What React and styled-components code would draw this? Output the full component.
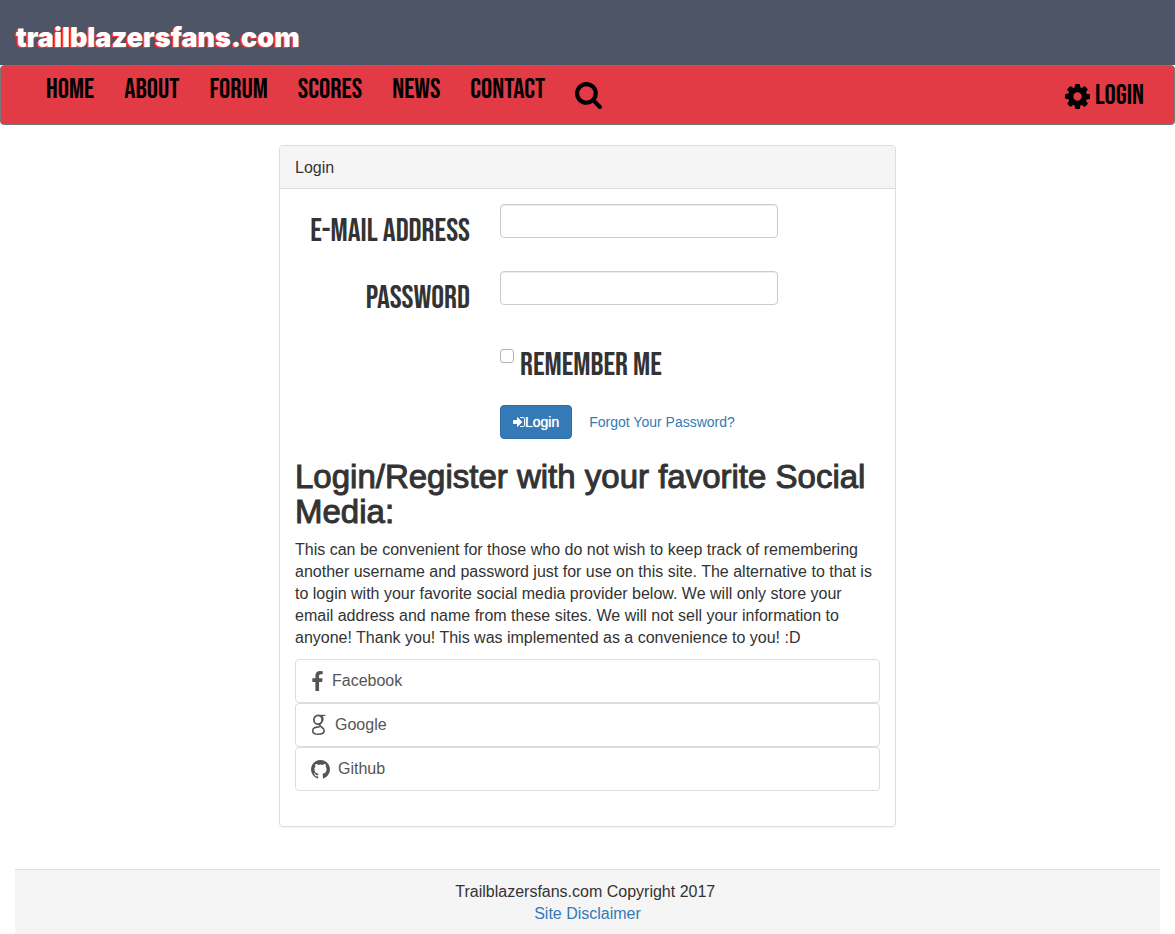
import React from "react";
import styled, { createGlobalStyle } from "styled-components";

const display = `"Bebas Neue", "Liberation Sans Narrow", "Roboto Condensed", "Liberation Sans", sans-serif`;

const GlobalStyle = createGlobalStyle`
  *, *::before, *::after { box-sizing: border-box; }
  body {
    margin: 0;
    background: #fff;
    color: #333;
    font-family: "Helvetica Neue", Helvetica, "Liberation Sans", Arial, sans-serif;
    font-size: 16px;
    line-height: 22px;
  }
  a { color: #337ab7; text-decoration: none; }
  a:hover { text-decoration: underline; }
`;

const Header = styled.header`
  height: 65px;
  padding: 22px 16px 0;
  background: #4e5566;
`;

const Logo = styled.a`
  && { color: #fff; text-decoration: none; }
  display: inline-block;
  font-family: Inter, sans-serif;
  font-size: 27px;
  font-weight: 900;
  line-height: 32px;
  text-shadow: -2px 1px 0 #f33;
`;

const Navbar = styled.nav`
  display: flex;
  justify-content: space-between;
  min-height: 60px;
  padding: 0 15px;
  margin-bottom: 20px;
  background: #e23b46;
  border: 1px solid #777;
  border-radius: 4px;
`;

const NavList = styled.ul`
  display: flex;
  margin: 0;
  padding: 0 0 0 15px;
  list-style: none;
`;

const NavLink = styled.a`
  && { color: #000; }
  display: flex;
  align-items: center;
  gap: 5px;
  padding: ${(p) => (p.$low ? "16px" : "10px")} 15px 0;
  font-family: ${display};
  font-size: 28px;
  line-height: 28px;
`;

const Icon = styled.svg`
  display: block;
  flex: none;
  width: ${(p) => p.$w}px;
  height: ${(p) => p.$h || p.$w}px;
  fill: currentColor;
`;

const Container = styled.main`
  max-width: 647px;
  margin: 0 auto;
  padding: 0 15px;
`;

const Panel = styled.section`
  margin-bottom: 42px;
  border: 1px solid #ddd;
  border-radius: 4px;
  box-shadow: 0 1px 1px rgba(0, 0, 0, 0.05);
`;

const PanelHeading = styled.div`
  padding: 11px 15px 9px;
  background: #f5f5f5;
  border-bottom: 1px solid #ddd;
  border-radius: 3px 3px 0 0;
`;

const PanelBody = styled.div`
  padding: 15px 15px 35px;
`;

const FormRow = styled.div`
  display: grid;
  grid-template-columns: 4fr 6fr 2fr;
  margin: 0 -15px 15px;
  > * { margin-left: 15px; margin-right: 15px; }
`;

const Label = styled.label`
  padding: 5px 0 2px;
  font-family: ${display};
  font-size: 32px;
  font-weight: 400;
  line-height: 45px;
  text-align: ${(p) => (p.$plain ? "left" : "right")};
  text-transform: uppercase;
  white-space: nowrap;
`;

const Input = styled.input`
  width: 100%;
  height: 34px;
  padding: 6px 12px;
  border: 1px solid #ccc;
  border-radius: 4px;
  box-shadow: inset 0 1px 1px rgba(0, 0, 0, 0.075);
  font: inherit;
  color: #555;
`;

const Field = styled.div`
  grid-column: ${(p) => (p.$wide ? "2 / 4" : "2")};
  display: flex;
  align-items: ${(p) => (p.$wide ? "center" : "flex-start")};
`;

const Checkbox = styled.input`
  appearance: none;
  width: 14px;
  height: 14px;
  margin: 11px 6px 0 0;
  border: 1px solid #b3b3b3;
  border-radius: 3px;
  background: #fff;
  &:checked { background: #337ab7; }
`;

const Button = styled.button`
  display: flex;
  align-items: center;
  height: 34px;
  padding: 6px 12px;
  margin-right: 17px;
  border: 1px solid #2e6da4;
  border-radius: 4px;
  background: #337ab7;
  color: #fff;
  font: 400 14px/20px "Helvetica Neue", "Liberation Sans", sans-serif;
  text-shadow: 0 0 1px #fff;
`;

const SmallLink = styled.a`
  font-size: 14px;
  line-height: 20px;
`;

const Title = styled.h2`
  margin: 20px 0 10px;
  font-size: 33px;
  font-weight: 400;
  line-height: 35px;
  -webkit-text-stroke: 1px #333;
`;

const Text = styled.p`
  margin: 0 0 10px;
`;

const Social = styled.a`
  && { color: #555; }
  display: flex;
  align-items: center;
  gap: 8px;
  padding: 10px 15px;
  border: 1px solid #ddd;
  border-radius: 4px;
`;

const Footer = styled.footer`
  margin: 0 15px;
  padding: 11px 15px 10px;
  background: #f5f5f5;
  border-top: 1px solid #ddd;
  text-align: center;
`;

const pages = ["HOME", "ABOUT", "FORUM", "SCORES", "NEWS", "CONTACT"];

const SearchIcon = () => (
  <Icon $w={27} viewBox="64 128 1664 1664" aria-hidden="true">
    <path d="M1216 832q0-185-131.5-316.5t-316.5-131.5-316.5 131.5-131.5 316.5 131.5 316.5 316.5 131.5 316.5-131.5 131.5-316.5zm512 832q0 52-38 90t-90 38q-54 0-90-38l-343-342q-179 124-399 124-143 0-273.5-55.5t-225-150-150-225-55.5-273.5 55.5-273.5 150-225 225-150 273.5-55.5 273.5 55.5 225 150 150 225 55.5 273.5q0 220-124 399l343 343q37 37 37 90z" />
  </Icon>
);

const CogIcon = () => (
  <Icon $w={25} viewBox="128 128 1536 1536" aria-hidden="true">
    <path d="M1152 896q0-106-75-181t-181-75-181 75-75 181 75 181 181 75 181-75 75-181zm512-109v222q0 12-8 23t-20 13l-185 28q-19 54-39 91 35 50 107 138 10 12 10 25t-9 23q-27 37-99 108t-94 71q-12 0-26-9l-138-108q-44 23-91 38-16 136-29 186-7 28-36 28h-222q-14 0-24.5-8.5t-11.5-21.5l-28-184q-49-16-90-37l-141 107q-10 9-25 9-14 0-25-11-126-114-165-168-7-10-7-23 0-12 8-23 15-21 51-66.5t54-70.5q-27-50-41-99l-183-27q-13-2-21-12.5t-8-23.5v-222q0-12 8-23t19-13l186-28q14-46 39-92-40-57-107-138-10-12-10-24 0-10 9-23 26-36 98.5-107.5t94.5-71.5q13 0 26 10l138 107q44-23 91-38 16-136 29-186 7-28 36-28h222q14 0 24.5 8.5t11.5 21.5l28 184q49 16 90 37l142-107q9-9 24-9 13 0 25 10 129 119 165 170 7 8 7 22 0 12-8 23-15 21-51 66.5t-54 70.5q26 50 41 98l183 28q13 2 21 12.5t8 23.5z" />
  </Icon>
);

const SignInIcon = () => (
  <Icon $w={12} viewBox="128 128 1536 1536" aria-hidden="true">
    <path d="M1312 896q0 26-19 45l-544 544q-19 19-45 19t-45-19-19-45v-288h-448q-26 0-45-19t-19-45v-384q0-26 19-45t45-19h448v-288q0-26 19-45t45-19 45 19l544 544q19 19 19 45zm352-352v704q0 119-84.5 203.5t-203.5 84.5h-320q-13 0-22.5-9.5t-9.5-22.5q0-4-1-20t-.5-26.5 3-23.5 10-19.5 20.5-6.5h320q66 0 113-47t47-113v-704q0-66-47-113t-113-47h-312l-11.5-1-11.5-3-8-5.5-7-9-2-13.5q0-4-1-20t-.5-26.5 3-23.5 10-19.5 20.5-6.5h320q119 0 203.5 84.5t84.5 203.5z" />
  </Icon>
);

const FacebookIcon = () => (
  <Icon $w={13} $h={20} viewBox="420 0 980 1664" aria-hidden="true">
    <path d="M1343 12v264h-157q-86 0-116 36t-30 108v189h293l-39 296h-254v759h-306v-759h-255v-296h255v-218q0-186 104-288.5t277-102.5q147 0 228 12z" />
  </Icon>
);

const GoogleIcon = () => (
  <Icon $w={16} $h={22} viewBox="0 0 16 22" aria-hidden="true">
    <g fill="none" stroke="currentColor">
      <ellipse cx="7" cy="5.800" rx="4.100" ry="4.400" strokeWidth="1.700" />
      <path d="M7 1.400h7.300" strokeWidth="1.200" />
      <path d="M10.500 1.500c1.900 2.500 1.700 5.300-.3 7.300-1.500 1.300-2.500 1.900-1 3.200" strokeWidth="1.500" />
      <path
        d="M8.600 12.900c-4.400 0-6.900 1.200-6.900 3.800 0 2.400 2.300 3.600 5.500 3.600 3.700 0 6-1.500 6-3.800 0-2-1.700-2.700-3.900-4.300-1.200-1.100-1.300-1.700-.7-2.600"
        strokeWidth="1.600"
      />
    </g>
  </Icon>
);

const GithubIcon = () => (
  <Icon $w={19} viewBox="128 128 1536 1536" aria-hidden="true">
    <path d="M896 128q209 0 385.500 103t279.500 279.500 103 385.500q0 251-146.500 451.500t-378.500 277.500q-27 5-40-7t-13-30q0-3 .5-76.500t.5-134.500q0-97-52-142 57-6 102.500-18t94-39 81-66.500 53-105 20.500-150.500q0-119-79-206 37-91-8-204-28-9-81 11t-92 44l-38 24q-93-26-192-26t-192 26q-16-11-42.500-27t-83.500-38.500-85-13.500q-45 113-8 204-79 87-79 206 0 85 20.500 150t52.500 105 80.500 67 94 39 102.500 18q-39 36-49 103-21 10-45 15t-57 5-65.500-21.500-55.500-62.500q-19-32-48.500-52t-49.500-24l-20-3q-21 0-29 4.500t-5 11.500 9 14 13 12l7 5q22 10 43.500 38t31.500 51l10 23q13 38 44 61.500t67 30 69.500 7 55.500-3.500l23-4q0 38 .5 88.500t.5 54.500q0 18-13 30t-40 7q-232-77-378.500-277.500t-146.500-451.500q0-209 103-385.500t279.500-279.500 385.500-103z" />
  </Icon>
);

export default function App() {
  return (
    <>
      <GlobalStyle />
      <Header>
        <Logo href="#home">trailblazersfans.com</Logo>
      </Header>
      <Navbar>
        <NavList>
          {pages.map((page) => (
            <li key={page}>
              <NavLink href={`#${page.toLowerCase()}`}>{page}</NavLink>
            </li>
          ))}
          <li>
            <NavLink $low href="#search" aria-label="Search">
              <SearchIcon />
            </NavLink>
          </li>
        </NavList>
        <NavList>
          <li>
            <NavLink $low href="#login">
              <CogIcon />
              LOGIN
            </NavLink>
          </li>
        </NavList>
      </Navbar>
      <Container>
        <Panel>
          <PanelHeading>Login</PanelHeading>
          <PanelBody>
            <form onSubmit={(e) => e.preventDefault()}>
              <FormRow>
                <Label htmlFor="email">E-Mail Address</Label>
                <Field>
                  <Input id="email" type="email" />
                </Field>
              </FormRow>
              <FormRow>
                <Label htmlFor="password">Password</Label>
                <Field>
                  <Input id="password" type="password" />
                </Field>
              </FormRow>
              <FormRow>
                <Field>
                  <Checkbox id="remember" type="checkbox" />
                  <Label $plain htmlFor="remember">Remember Me</Label>
                </Field>
              </FormRow>
              <FormRow>
                <Field $wide>
                  <Button type="submit">
                    <SignInIcon />
                    Login
                  </Button>
                  <SmallLink href="#forgot">Forgot Your Password?</SmallLink>
                </Field>
              </FormRow>
            </form>
            <Title>Login/Register with your favorite Social Media:</Title>
            <Text>
              This can be convenient for those who do not wish to keep track of remembering another
              username and password just for use on this site. The alternative to that is to login
              with your favorite social media provider below. We will only store your email address
              and name from these sites. We will not sell your information to anyone! Thank you!
              This was implemented as a convenience to you! :D
            </Text>
            <Social href="#facebook"><FacebookIcon />Facebook</Social>
            <Social href="#google"><GoogleIcon />Google</Social>
            <Social href="#github"><GithubIcon />Github</Social>
          </PanelBody>
        </Panel>
      </Container>
      <Footer>
        <div>Trailblazersfans.com Copyright 2017&nbsp;</div>
        <a href="#disclaimer">Site Disclaimer</a>
      </Footer>
    </>
  );
}
